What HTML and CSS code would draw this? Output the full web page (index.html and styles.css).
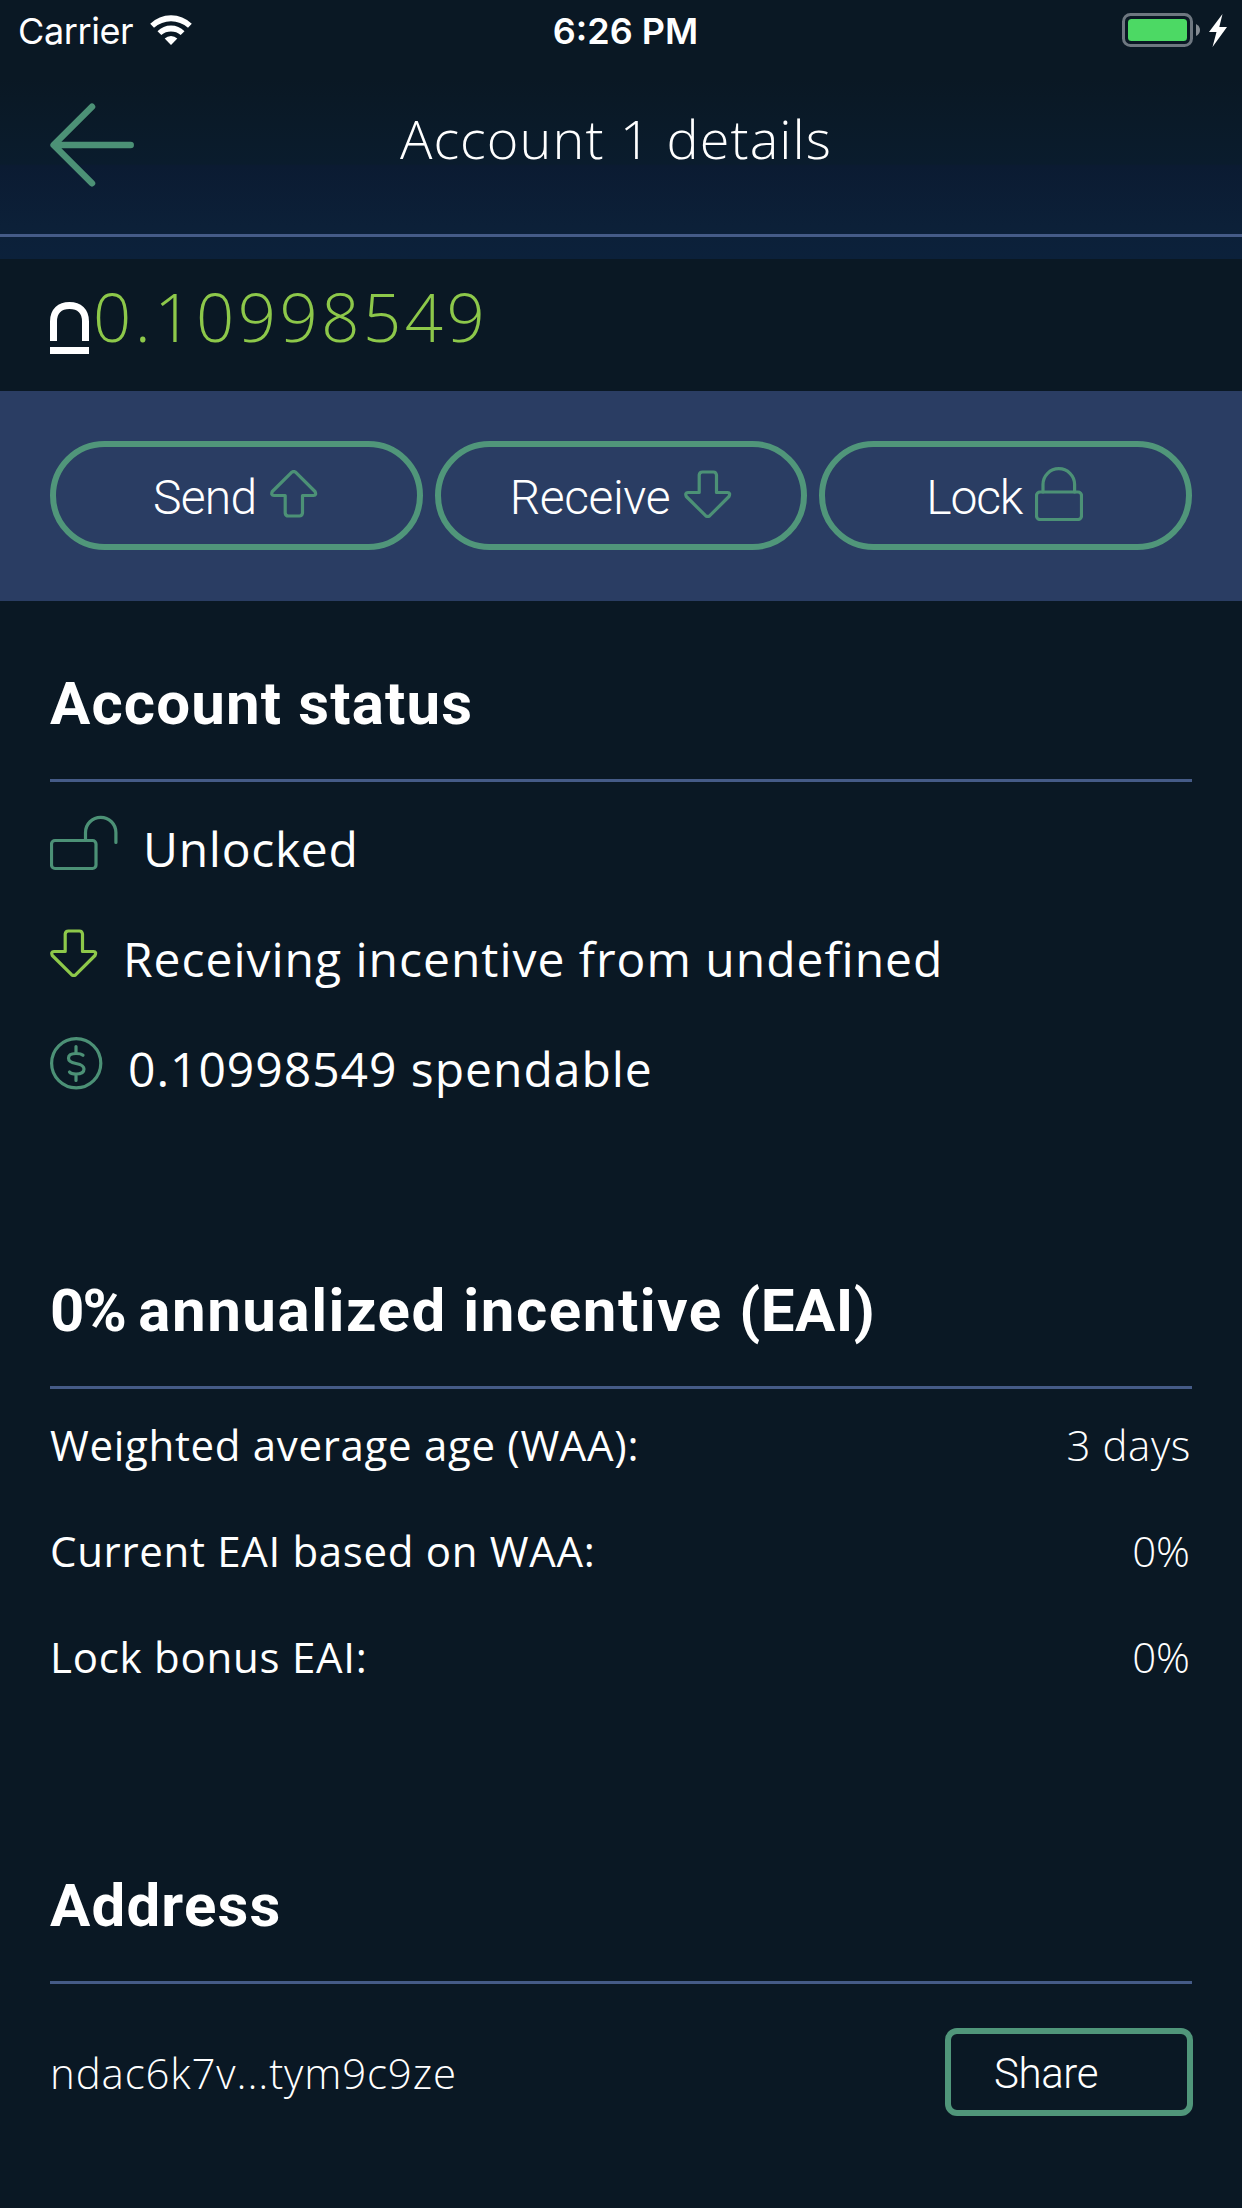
FILE: index.html
```html
<!DOCTYPE html>
<html lang="en">
<head>
<meta charset="utf-8">
<title>Account 1 details</title>
<link rel="stylesheet" href="styles.css">
</head>
<body>
<header class="header">
  <div class="status-bar">
    <div class="carrier">
      <span>Carrier</span>
      <svg width="42" height="31" viewBox="0 0 42 31" fill="#fff">
        <path d="M0.2 8.8 Q9 .2 21 .2 T41.8 8.8 L38 12.8 Q30.500 6.300 21 6.300 T4 12.800 Z"/>
        <path d="M7.500 16.200 Q13.200 10.600 21 10.600 T34.500 16.200 L30.700 20 Q26.500 16.600 21 16.600 T11.300 20 Z"/>
        <path d="M14.700 23.600 Q17.300 21 21 21 T27.300 23.600 L21 30 Z"/>
      </svg>
    </div>
    <div class="clock">6:26 PM</div>
    <div class="power">
      <svg width="106" height="36" viewBox="0 0 106 36">
        <rect x="1.500" y="1.500" width="68" height="31" rx="7" fill="none" stroke="#6e7780" stroke-width="3"/>
        <rect x="6" y="6" width="59" height="22" rx="3.500" fill="#4cd964"/>
        <path d="M74 11 Q78 13 78 17 T74 23 Z" fill="#858c93"/>
        <path d="M100.500 1 L87 19 H94.500 L90.500 34 L105 14 H97.300 Z" fill="#fff"/>
      </svg>
    </div>
  </div>
  <nav class="nav">
    <svg class="back" width="84" height="84" viewBox="0 0 84 84" fill="none" stroke="#4c9176" stroke-width="6.500" stroke-linecap="round" stroke-linejoin="round">
      <path d="M42 3.800 L3.600 42 L42 80.200 M4 42 H80.700"/>
    </svg>
    <h1 class="title">Account 1 details</h1>
    <span></span>
  </nav>
</header>

<main>
  <div class="balance">
    <svg class="coin" width="39" height="52" viewBox="0 0 39 52">
      <path d="M3.500 39 V19.500 C3.500 9 10 3.500 19.500 3.500 S35.500 9 35.500 19.500 V39" fill="none" stroke="#fff" stroke-width="7"/>
      <rect y="45" width="39" height="7" fill="#fff"/>
    </svg>
    <span class="amount">0.10998549</span>
  </div>

  <div class="actions">
    <button class="pill send"><span>Send</span>
      <svg width="48" height="48" viewBox="0 0 48 48" class="line"><path d="M21.600 2.300 Q23.700 .7 25.800 2.300 L45 21.500 Q46.800 25.300 43.500 25.500 H32.500 V43 Q32 46 29.500 46 H18.500 Q15.500 46 15.200 43 V25.500 H4 Q.6 25.300 2.300 21.500 Z"/></svg>
    </button>
    <button class="pill receive"><span>Receive</span>
      <svg width="48" height="48" viewBox="0 0 48 48" class="line"><path d="M21.600 45.700 Q23.700 47.300 25.800 45.700 L45 26.500 Q46.800 22.700 43.500 22.500 H32.500 V5 Q32 2 29.500 2 H18.500 Q15.500 2 15.200 5 V22.500 H4 Q.6 22.700 2.300 26.500 Z"/></svg>
    </button>
    <button class="pill lock"><span>Lock</span>
      <svg width="48" height="54" viewBox="0 0 48 54" class="line"><rect x="1.500" y="25" width="45" height="27.500" rx="3.500"/><path d="M8 25 V17.500 A15.800 15.800 0 0 1 39.600 17.500 V25"/></svg>
    </button>
  </div>

  <section class="section">
    <h2>Account status</h2>
    <ul class="statuses">
      <li class="unlocked">
        <svg width="69" height="56" viewBox="0 0 69 56" class="line"><rect x="1.500" y="25.500" width="44.500" height="28" rx="3.500"/><path d="M35.500 25.500 V17.500 A15.200 15.200 0 0 1 65.900 17.500 V27.500"/></svg>
        <span>Unlocked</span>
      </li>
      <li class="incentive">
        <svg width="48" height="48" viewBox="0 0 48 48" class="line lime"><path d="M21.600 45.700 Q23.700 47.300 25.800 45.700 L45 26.500 Q46.800 22.700 43.500 22.500 H32.500 V5 Q32 2 29.500 2 H18.500 Q15.500 2 15.200 5 V22.500 H4 Q.6 22.700 2.300 26.500 Z"/></svg>
        <span>Receiving incentive from undefined</span>
      </li>
      <li class="spendable">
        <svg width="53" height="53" viewBox="0 0 53 53" class="line"><circle cx="26.200" cy="26.200" r="24.600"/><path d="M33 18.200 Q31 16.500 26 16.500 Q18.500 16.500 18.500 21.200 Q18.500 25 26 26.500 Q34 28 34 32 Q34 37 26 37 Q21 37 19.500 35 M26 9.500 V16 M26 37.500 V43.500"/></svg>
        <span>0.10998549 spendable</span>
      </li>
    </ul>
  </section>

  <section class="section eai">
    <h2><span class="percent">0% </span>annualized incentive <span class="abbr">(EAI)</span></h2>
    <dl class="rates">
      <div><dt class="waa">Weighted average age (WAA):</dt><dd class="days">3 days</dd></div>
      <div><dt class="current">Current EAI based on WAA:</dt><dd>0%</dd></div>
      <div><dt class="bonus">Lock bonus EAI:</dt><dd>0%</dd></div>
    </dl>
  </section>

  <section class="section address">
    <h2>Address</h2>
    <div class="address-row">
      <span class="hash">ndac6k7v...tym9c9ze</span>
      <button class="share">Share</button>
    </div>
  </section>
</main>
</body>
</html>
```
FILE: styles.css
```css
* { box-sizing: border-box; }
body {
  margin: 0;
  min-height: 2208px;
  background: #0a1824;
  color: #fff;
  font-family: "Open Sans", sans-serif;
}
h1, h2, ul, dl, dd { margin: 0; padding: 0; }
ul { list-style: none; }
svg { display: block; flex: none; }
button { background: none; color: #fff; padding: 0; margin: 0; }

.header {
  height: 259px;
  background: linear-gradient(#0a1824 0, #0a1824 78px, #0a1c2d 164px, #0b1b32 166px, #0c2038 225px, #0c213b 259px);
}
.status-bar {
  height: 60px;
  padding: 0 14px 0 18px;
  display: grid;
  grid-template-columns: 1fr auto 1fr;
  font: 400 36px/60px Inter, sans-serif;
}
.carrier { display: flex; gap: 17px; letter-spacing: -.4px; }
.carrier svg { margin-top: 15px; }
.carrier span { height: 60px; line-height: 62px; }
.clock { font-weight: 600; line-height: 62px; padding-left: 5px; }
.power { display: flex; justify-content: flex-end; padding-top: 13px; }
.nav {
  height: 177px;
  border-bottom: 3px solid #455b87;
  padding: 0 50px;
  display: grid;
  grid-template-columns: 1fr auto 1fr;
}
.back { margin-top: 43px; }
.title {
  font-weight: 300;
  font-size: 54px;
  line-height: 80px;
  letter-spacing: 1.06px;
  margin-top: 38px;
  padding-right: 10px;
}

.balance {
  height: 132px;
  padding: 0 50px;
  display: flex;
}
.coin { margin-top: 43px; }
.amount {
  margin-left: 4px;
  color: #8dc84a;
  font-weight: 340;
  font-size: 67px;
  line-height: 115px;
  letter-spacing: 3.5px;
}

.actions {
  height: 210px;
  padding: 50px;
  display: grid;
  grid-template-columns: repeat(3, 1fr);
  gap: 12px;
  background: #2a3d63;
}
.pill {
  height: 109px;
  border: 6px solid #50967a;
  border-radius: 55px;
  display: flex;
  font: 350 48px/97px Roboto, sans-serif;
}
.pill span { height: 97px; line-height: 102px; flex: none; text-align: left; }
.send span { width: 212px; padding-left: 97px; letter-spacing: -.7px; }
.receive span { width: 241px; padding-left: 69px; letter-spacing: -.4px; }
.lock span { width: 208px; padding-left: 101px; letter-spacing: -1.2px; }
.pill svg { margin-top: 23px; margin-left: 2px; }
.lock svg { margin-top: 20px; }
.line {
  fill: none;
  stroke: #4c9176;
  stroke-width: 3.2;
  stroke-linecap: round;
  stroke-linejoin: round;
}
.lime { stroke: #8dc84a; }

.section { padding: 64px 50px 0; }
.section h2 {
  height: 117px;
  border-bottom: 3px solid #455b87;
  font: 700 60px/78px Roboto, sans-serif;
  letter-spacing: 1.15px;
}
.statuses { padding-top: 11px; height: 341px; }
.statuses li {
  display: flex;
  height: 110px;
  font-size: 48px;
  line-height: 112px;
  letter-spacing: .98px;
}
.statuses .unlocked { letter-spacing: .7px; }
.unlocked svg { margin: 22px 24px 0 0; }
.incentive svg { margin: 26px 25px 0 0; }
.spendable svg { margin: 24px 25px 0 0; }

.section.eai { padding-top: 149px; }
.section.eai h2 { letter-spacing: 1.55px; }
.section .percent { letter-spacing: -1.8px; }
.section .abbr { letter-spacing: .5px; }
.rates { padding-top: 3px; height: 328px; }
.rates div {
  display: flex;
  justify-content: space-between;
  height: 106px;
  font-size: 42px;
  line-height: 106px;
}
.waa, .current { letter-spacing: .68px; }
.bonus { letter-spacing: .75px; }
.rates dd { font-weight: 300; padding-right: 2px; }
.rates .days { letter-spacing: .6px; padding-right: 1px; }

.section.address { padding-top: 150px; }
.address-row {
  display: flex;
  justify-content: space-between;
  margin-top: 44px;
}
.hash {
  font-size: 42px;
  font-weight: 300;
  line-height: 89px;
  letter-spacing: .87px;
}
.share {
  width: 248px;
  height: 88px;
  margin-right: -1px;
  border: 6px solid #50967a;
  border-radius: 12px;
  padding-left: 43px;
  text-align: left;
  font: 300 42px/79px Roboto, sans-serif;
  letter-spacing: -.4px;
}
```
